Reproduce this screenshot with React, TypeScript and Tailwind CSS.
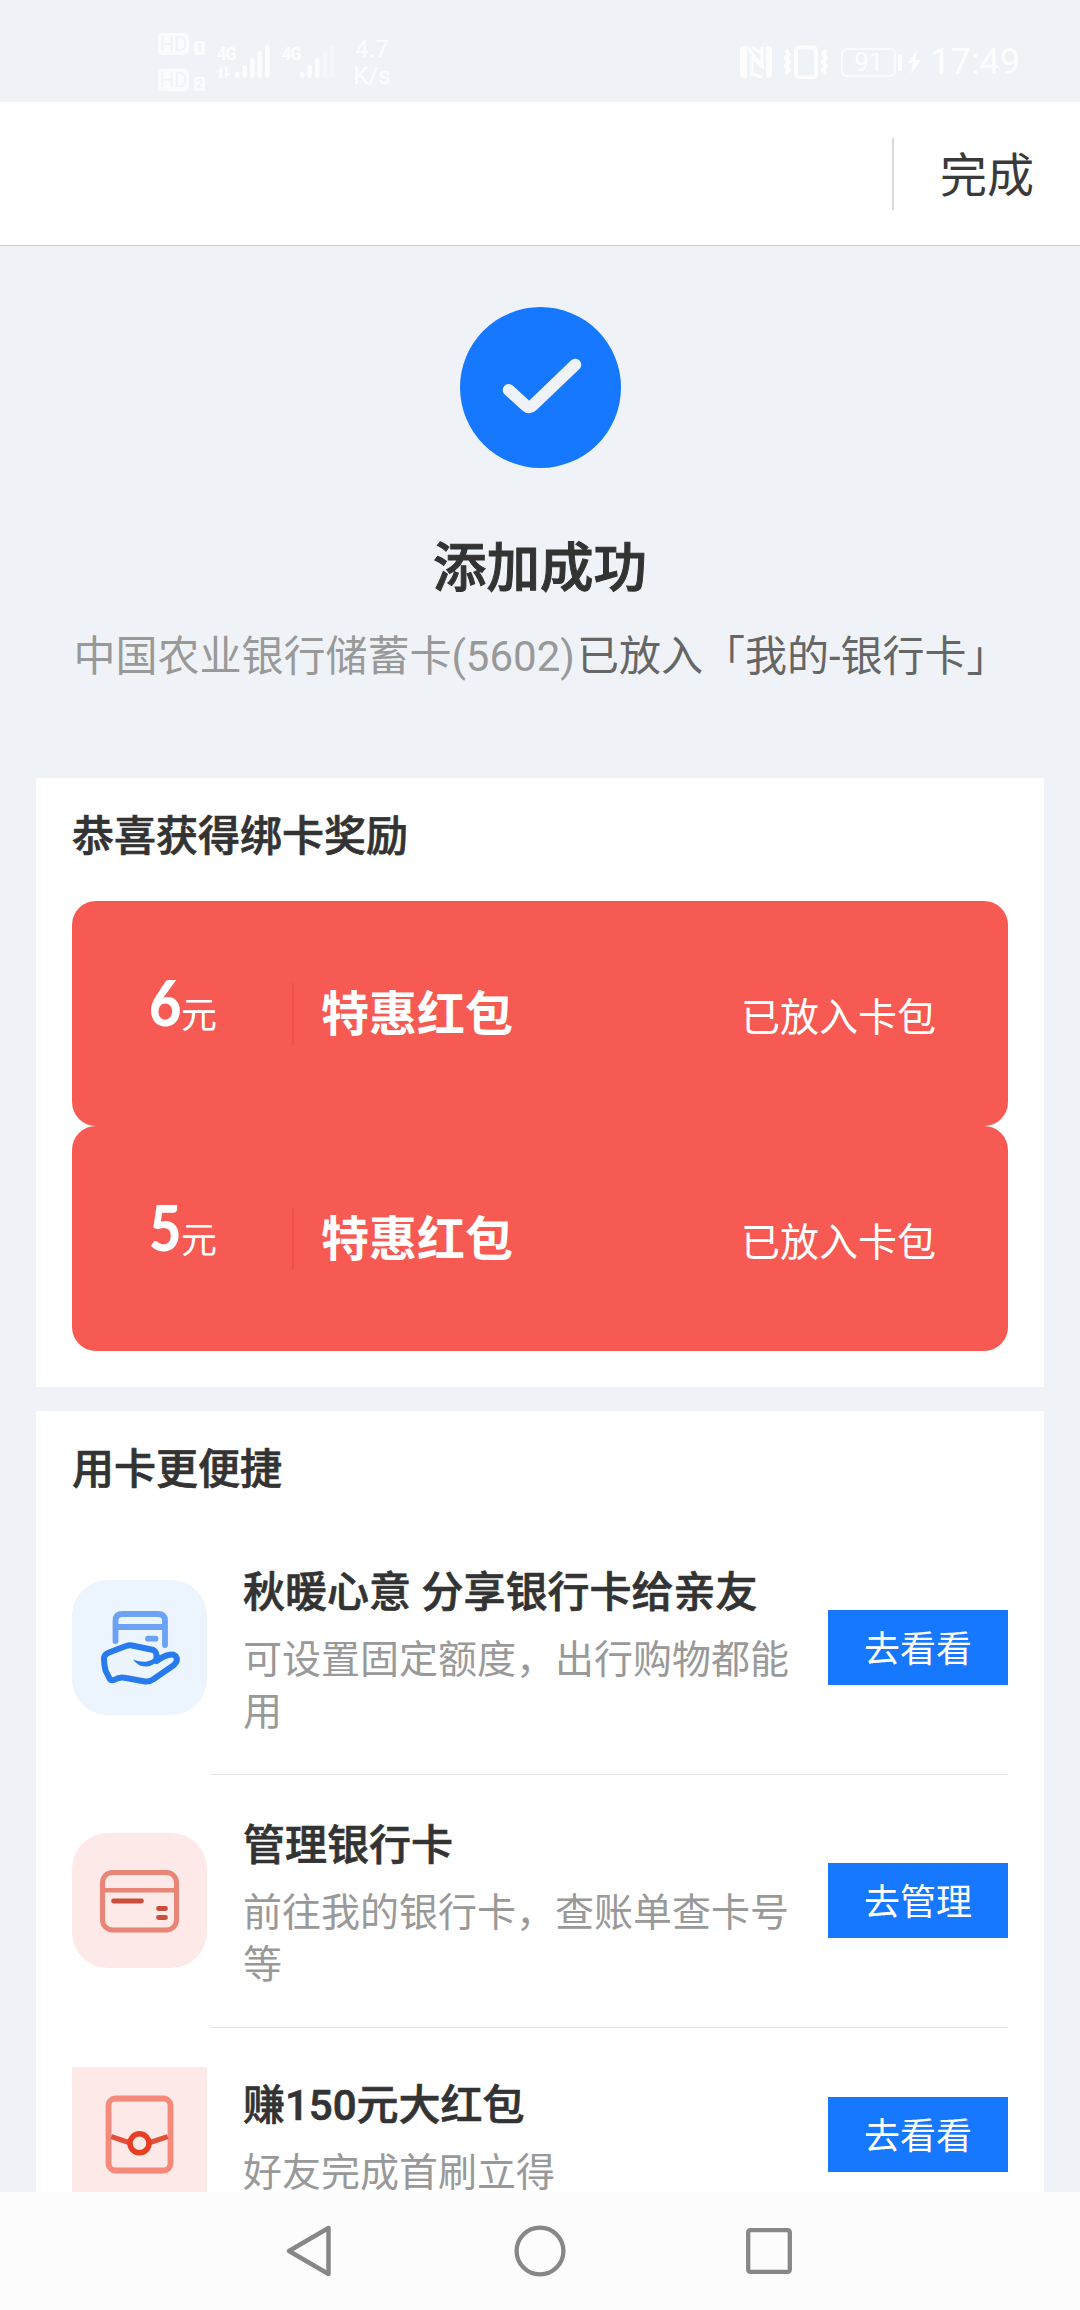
import React from "react";

function HdBadge({ slot }: { slot: string }) {
  return (
    <div className="flex h-[22px] items-end gap-[5px]">
      <span className="flex h-[22px] w-[31px] items-center justify-center rounded-[5px] bg-[#fbfcfe] text-[20px] leading-none text-[#eff2f8]">
        HD
      </span>
      <span className="flex h-[14px] w-[11px] items-center justify-center rounded-[2px] bg-[#fbfcfe] text-[12px] leading-none font-bold text-[#eff2f8]">
        {slot}
      </span>
    </div>
  );
}

function Signal({ active, arrows }: { active: number; arrows?: boolean }) {
  const heights = [6, 13, 20, 27, 33];
  return (
    <div className="relative h-[34px] w-[54px]">
      <span className="absolute top-0 left-0 origin-left scale-x-85 text-[19px] leading-[17px] font-bold tracking-[-1px] text-[#fdfdfe]">
        4G
      </span>
      <svg className="absolute inset-0" width="54" height="34" viewBox="0 0 54 34" fill="#fdfdfe">
        {arrows && <path d="M0 27l5-5v11H2.500v-7L0 28zM8 22v11l6-5h-3.500v-6z" />}
        {heights.map((h, i) => (
          <rect key={i} x={18 + i * 7.5} y={33 - h} width="4.500" height={h} rx="2" opacity={i < active ? 1 : 0.35} />
        ))}
      </svg>
    </div>
  );
}

function StatusBar() {
  return (
    <div className="flex h-[102px] shrink-0 items-start justify-between pt-[33px] pr-[60px] pl-[158px] text-[#fdfdfe]">
      <div className="flex items-start">
        <div className="flex flex-col gap-[14px]">
          <HdBadge slot="1" />
          <HdBadge slot="2" />
        </div>
        <div className="mt-[12px] ml-[12px] flex gap-[11px]">
          <Signal active={5} arrows />
          <Signal active={3} />
        </div>
        <div className="mt-[3px] ml-[16px] w-[40px] text-center text-[24px] leading-[27px]">
          4.7
          <br />
          K/s
        </div>
      </div>
      <div className="mt-[12px] flex items-center">
        <svg width="34" height="34" viewBox="0 0 34 34" fill="none" stroke="#fdfdfe">
          <path d="M8 1H5Q1 1 1 5v24q0 4 4 4h3z" fill="#fdfdfe" stroke="none" />
          <path d="M27 1h2q4 0 4 4v24q0 4-4 4h-2z" fill="#fdfdfe" stroke="none" />
          <path d="M9 2q2 6 13 16M13 11v20M13 12q4 5 12 11M23 2v20M14 29l9 3M13 2l9 6" strokeWidth="3" />
        </svg>
        <svg className="ml-[11px]" width="44" height="34" viewBox="0 0 44 34" fill="none" stroke="#fdfdfe" strokeWidth="4">
          <rect x="12" y="2.500" width="20" height="30" rx="3" />
          <path d="M2 5l3 4-3 4 3 4-3 4 3 4-3 4M42 5l-3 4 3 4-3 4 3 4-3 4 3 4" strokeWidth="4" />
        </svg>
        <span className="ml-[13px] flex h-[29px] w-[55px] items-center justify-center rounded-[6px] border-2 border-[#fafbfe] text-[26px] leading-none">
          91
        </span>
        <span className="ml-[2px] h-[17px] w-[4px] rounded-r-[2px] bg-[#fdfdfe]" />
        <svg className="ml-[6px]" width="13" height="24" viewBox="0 0 13 24" fill="#fdfdfe">
          <path d="M9 0L0 13h5L3 24l10-14H7z" />
        </svg>
        <span className="ml-[9px] text-[36px] leading-[34px]">17:49</span>
      </div>
    </div>
  );
}

function Coupon({ amount }: { amount: string }) {
  return (
    <div className="flex h-[225px] items-center rounded-[24px] bg-[#f75a52] text-white">
      <div className="flex h-full w-[220px] items-start pt-[65px] pl-[77px]">
        <span className="w-[32px] origin-left scale-x-90 font-[Lato] text-[62px] leading-[72px] font-black">{amount}</span>
        <span className="mt-[23px] text-[36px] leading-[54px]">元</span>
      </div>
      <span className="h-[62px] w-[2px] bg-[#f1504a]" />
      <span className="mt-[3px] ml-[27px] text-[48px] leading-[72px] font-bold">特惠红包</span>
      <span className="mt-[8px] mr-[72px] ml-auto text-[39px] leading-[58px]">已放入卡包</span>
    </div>
  );
}

function ShareCardIcon() {
  return (
    <svg className="shrink-0" width="135" height="135" viewBox="0 0 135 135" fill="none" strokeLinecap="round" strokeLinejoin="round">
      <rect width="135" height="135" rx="36" fill="#ecf4fe" />
      <g stroke="#6ba2f3" strokeWidth="5.800">
        <path d="M43.500 61V41q0-7 7-7H86q7 0 7 7v24M43.500 47H93" />
        <path d="M76 58.700h7.500" />
      </g>
      <path
        d="M84.500 78q.5-6-3-8L60 65.500q-3-.5-6 .5L37 72.500q-5 2-5 6 0 6 1.500 12l4 8q1.500 2.500 4.500 1.500 6-3.500 12-2l19 3.500q4 .5 8-2L102 85q4-4 2.500-7.500-2-4-8-2.500-5 1-12 6"
        stroke="#277bed"
        strokeWidth="6"
      />
      <path d="M61 79.500q8 3 14 2 5-1 9-5l2.500 4q-6 6-13 6-8-.5-12.500-7z" fill="#277bed" />
    </svg>
  );
}

function ManageCardIcon() {
  return (
    <svg className="shrink-0" width="135" height="135" viewBox="0 0 135 135" fill="none" strokeLinecap="round">
      <rect width="135" height="135" rx="36" fill="#fde9e7" />
      <rect x="30.500" y="39.500" width="74" height="57.500" rx="10" stroke="#e98577" strokeWidth="5" />
      <path d="M31 57.300h73" stroke="#e98577" strokeWidth="4.600" />
      <path d="M41.500 68h28M86.500 75.500h7M86.500 84.500h7" stroke="#ca4e3d" strokeWidth="4.800" />
    </svg>
  );
}

function RedPacketIcon() {
  return (
    <svg className="shrink-0" width="135" height="135" viewBox="0 0 135 135" fill="none">
      <rect width="135" height="135" fill="#fde9e7" />
      <rect x="36.500" y="31.500" width="62" height="72" rx="7" stroke="#f5897a" strokeWidth="5.800" />
      <path d="M39.300 69.700L57 75.500M95.700 69.700L78 75.500" stroke="#e2503c" strokeWidth="5" />
      <circle cx="67.500" cy="76.300" r="9.500" stroke="#e63f24" strokeWidth="5.500" />
    </svg>
  );
}

interface ServiceProps {
  icon: React.ReactNode;
  title: string;
  desc: string;
  action: string;
  className: string;
}

function Service({ icon, title, desc, action, className }: ServiceProps) {
  return (
    <div className={`flex items-center ${className}`}>
      {icon}
      <div className="ml-[36px] w-[549px] pt-[3px]">
        <div className="text-[42px] leading-[63px] font-medium whitespace-nowrap text-[#333333] [-webkit-text-stroke:0.7px_#333333]">
          {title}
        </div>
        <div className="mt-[10px] text-[39px] leading-[52px] text-[#999999]">{desc}</div>
      </div>
      <button className="ml-auto h-[75px] w-[180px] bg-[#1677ff] pt-[5px] text-[36px] leading-[70px] text-white">{action}</button>
    </div>
  );
}

export default function App() {
  return (
    <div className="flex h-[2310px] w-[1080px] flex-col overflow-hidden bg-[#eff3f8] font-[Roboto,'Noto_Sans_CJK_SC',sans-serif]">
      <StatusBar />
      <header className="flex h-[144px] shrink-0 items-center justify-end border-b border-[#cccccc] bg-white pr-[46px]">
        <span className="h-[72px] w-[2px] bg-[#d8d8d8]" />
        <span className="mt-[5px] ml-[46px] text-[47px] leading-[70px] text-[#3a3a3a]">完成</span>
      </header>

      <main className="flex min-h-0 flex-1 flex-col overflow-hidden">
        <div className="flex h-[532px] shrink-0 flex-col items-center pt-[61px]">
          <svg className="ml-px" width="161" height="161" viewBox="0 0 162 162" fill="none">
            <circle cx="81" cy="81" r="81" fill="#1677ff" />
            <path d="M49 83.500L66.500 99.500q3.200 3 6.200 0L116 58" stroke="#eff3f8" strokeWidth="12" strokeLinecap="round" />
          </svg>
          <h1 className="mt-[61px] text-[53.500px] leading-[80px] font-medium text-[#333333] [-webkit-text-stroke:1px_#333333]">
            添加成功
          </h1>
          <p className="mt-[16px] ml-[2px] text-[42px] leading-[63px] whitespace-nowrap text-[#666666]">
            <span className="text-[#999999]">中国农业银行储蓄卡(5602)</span>
            <span className="ml-[2px]">已放入「我的-银行卡」</span>
          </p>
        </div>

        <section className="mx-[36px] h-[609px] shrink-0 bg-white px-[36px] pt-[27px]">
          <h2 className="mb-[33px] text-[42px] leading-[63px] font-medium text-[#333333] [-webkit-text-stroke:0.7px_#333333]">
            恭喜获得绑卡奖励
          </h2>
          <Coupon amount="6" />
          <Coupon amount="5" />
        </section>

        <section className="mx-[36px] mt-[24px] shrink-0 bg-white px-[36px] pt-[27px]">
          <h2 className="mb-[20px] text-[42px] leading-[63px] font-medium text-[#333333] [-webkit-text-stroke:0.7px_#333333]">
            用卡更便捷
          </h2>
          <Service
            className="h-[253px]"
            icon={<ShareCardIcon />}
            title="秋暖心意 分享银行卡给亲友"
            desc="可设置固定额度，出行购物都能用"
            action="去看看"
          />
          <div className="ml-[138px] h-px bg-[#e5e5e5]" />
          <Service
            className="mb-px h-[251px]"
            icon={<ManageCardIcon />}
            title="管理银行卡"
            desc="前往我的银行卡，查账单查卡号等"
            action="去管理"
          />
          <div className="ml-[138px] h-px bg-[#e5e5e5]" />
          <Service
            className="h-[213px]"
            icon={<RedPacketIcon />}
            title="赚150元大红包"
            desc="好友完成首刷立得"
            action="去看看"
          />
        </section>
      </main>

      <nav className="flex h-[118px] shrink-0 items-center bg-[#fcfcfc] pl-[285px]">
        <svg width="48" height="54" viewBox="0 0 48 54" fill="none" stroke="#878787" strokeWidth="4.500" strokeLinejoin="round">
          <path d="M43.500 4v46L4 27z" />
        </svg>
        <svg className="ml-[180px]" width="54" height="54" viewBox="0 0 54 54" fill="none" stroke="#878787" strokeWidth="4.300">
          <circle cx="27" cy="27" r="23.400" />
        </svg>
        <svg className="ml-[175px]" width="54" height="54" viewBox="0 0 54 54" fill="none" stroke="#878787" strokeWidth="4.300">
          <rect x="6.200" y="6.200" width="41.600" height="41.600" rx="2" />
        </svg>
      </nav>
    </div>
  );
}
